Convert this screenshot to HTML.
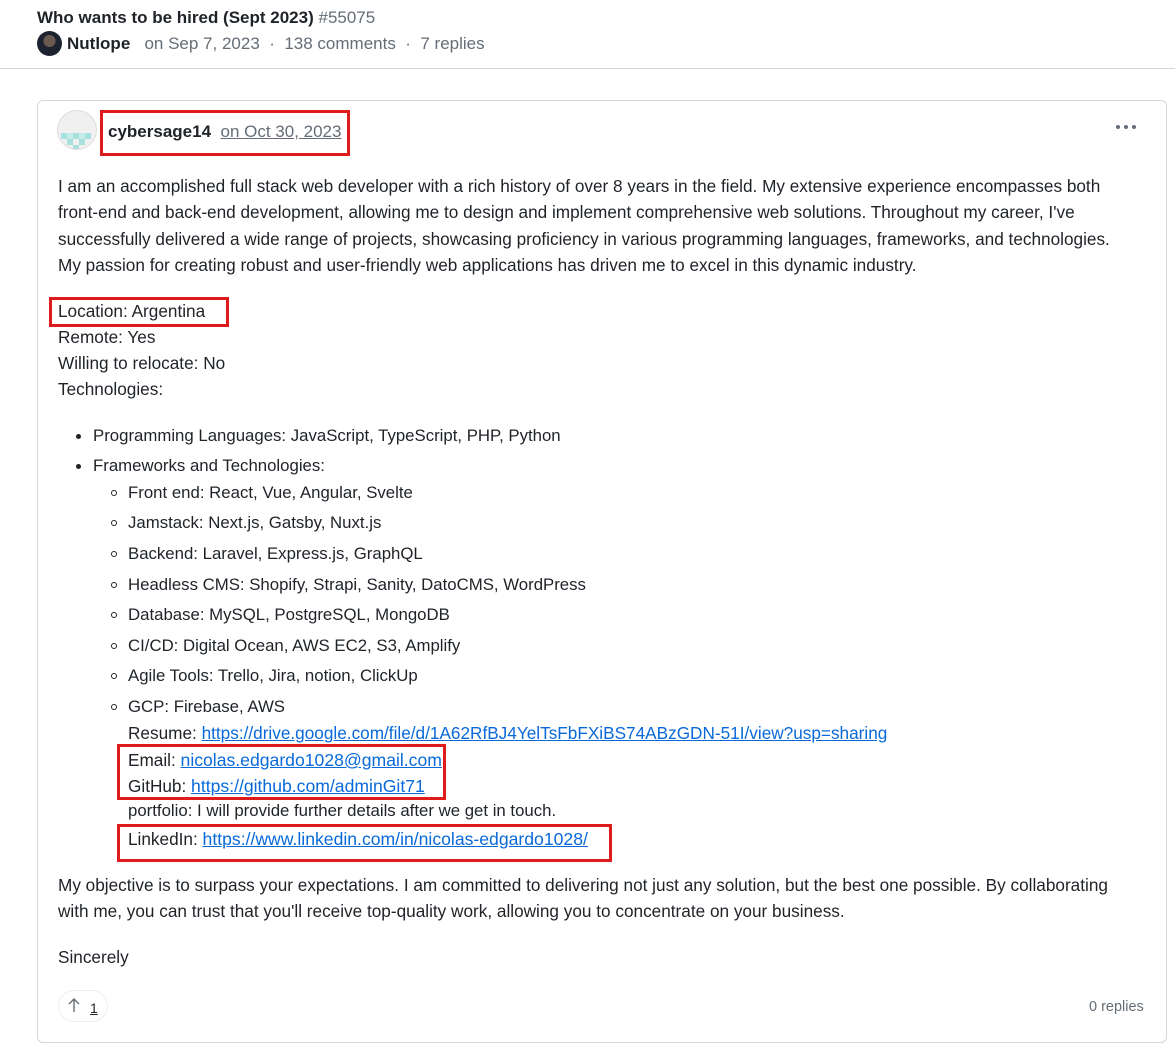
<!DOCTYPE html>
<html><head><meta charset="utf-8"><style>
*{margin:0;padding:0;box-sizing:border-box}
body{width:1175px;height:1051px;background:#fff;font-family:"Liberation Sans",sans-serif;color:#1f2328;position:relative;overflow:hidden}
.l{position:absolute;white-space:nowrap;font-size:17.2px;line-height:20px}
.s{font-size:16.8px}
a{color:#0969da;text-decoration:underline;font-size:17.6px}
.red{position:absolute;border:3.5px solid #e01b1b}
.dot{position:absolute;width:5px;height:5px;border-radius:50%;background:#1f2328}
.circ{position:absolute;width:6px;height:6px;border-radius:50%;border:1px solid #1f2328}
</style></head><body>
<div class="l" style="left:37px;top:8px;font-size:17px;font-weight:bold">Who wants to be hired (Sept 2023) <span style="font-weight:normal;color:#656d76">#55075</span></div>
<div style="position:absolute;left:37px;top:31px;width:25px;height:25px;border-radius:50%;background:radial-gradient(circle at 50% 40%,#6b5a50 0 30%,#1c2230 32%)"></div>
<div class="l" style="left:67px;top:34px;font-size:17px;color:#656d76"><b style="color:#1f2328">Nutlope</b> &nbsp;&nbsp;on Sep 7, 2023 &nbsp;·&nbsp; 138 comments &nbsp;·&nbsp; 7 replies</div>
<div style="position:absolute;left:0;top:68px;width:1175px;height:1px;background:#d0d7de"></div>
<div style="position:absolute;left:37px;top:100px;width:1130px;height:943px;border:1px solid #d0d7de;border-radius:6px"></div>
<div style="position:absolute;left:57px;top:110px;width:40px;height:40px;border-radius:50%;background:#f0f0f0;border:1px solid #ddd;overflow:hidden">
<div style="position:absolute;left:3px;top:22px;width:6px;height:6px;background:#a8e0dc"></div>
<div style="position:absolute;left:9px;top:28px;width:6px;height:6px;background:#a8e0dc"></div>
<div style="position:absolute;left:15px;top:22px;width:6px;height:6px;background:#a8e0dc"></div>
<div style="position:absolute;left:15px;top:34px;width:6px;height:6px;background:#a8e0dc"></div>
<div style="position:absolute;left:21px;top:28px;width:6px;height:6px;background:#a8e0dc"></div>
<div style="position:absolute;left:27px;top:22px;width:6px;height:6px;background:#a8e0dc"></div>
<div style="position:absolute;left:9px;top:22px;width:6px;height:6px;background:#c4ecea"></div>
<div style="position:absolute;left:21px;top:22px;width:6px;height:6px;background:#c4ecea"></div>
</div>
<div class="l" style="left:108px;top:122px;font-size:17px"><b>cybersage14</b> &nbsp;<span style="color:#656d76;text-decoration:underline">on Oct 30, 2023</span></div>
<div class="red" style="left:100px;top:110px;width:250px;height:46px"></div>
<div style="position:absolute;left:1116px;top:125px;font-size:0">
<span style="display:inline-block;width:4px;height:4px;border-radius:50%;background:#656d76;margin-right:4px"></span><span style="display:inline-block;width:4px;height:4px;border-radius:50%;background:#656d76;margin-right:4px"></span><span style="display:inline-block;width:4px;height:4px;border-radius:50%;background:#656d76"></span></div>

<div class="l" style="left:58px;top:176px">I am an accomplished full stack web developer with a rich history of over 8 years in the field. My extensive experience encompasses both</div>
<div class="l" style="left:58px;top:202px">front-end and back-end development, allowing me to design and implement comprehensive web solutions. Throughout my career, I've</div>
<div class="l" style="left:58px;top:229px">successfully delivered a wide range of projects, showcasing proficiency in various programming languages, frameworks, and technologies.</div>
<div class="l" style="left:58px;top:255px">My passion for creating robust and user-friendly web applications has driven me to excel in this dynamic industry.</div>

<div class="l" style="left:58px;top:301px">Location: Argentina</div>
<div class="red" style="left:49px;top:297px;width:180px;height:30px"></div>
<div class="l" style="left:58px;top:327px">Remote: Yes</div>
<div class="l" style="left:58px;top:353px">Willing to relocate: No</div>
<div class="l" style="left:58px;top:379px">Technologies:</div>

<div class="dot" style="left:76px;top:434px"></div>
<div class="l s" style="left:93px;top:426px">Programming Languages: JavaScript, TypeScript, PHP, Python</div>
<div class="dot" style="left:76px;top:464px"></div>
<div class="l s" style="left:93px;top:456px">Frameworks and Technologies:</div>

<div class="circ" style="left:111px;top:490px"></div><div class="l s" style="left:128px;top:483px">Front end: React, Vue, Angular, Svelte</div>
<div class="circ" style="left:111px;top:520px"></div><div class="l s" style="left:128px;top:513px">Jamstack: Next.js, Gatsby, Nuxt.js</div>
<div class="circ" style="left:111px;top:551px"></div><div class="l s" style="left:128px;top:544px">Backend: Laravel, Express.js, GraphQL</div>
<div class="circ" style="left:111px;top:582px"></div><div class="l s" style="left:128px;top:575px">Headless CMS: Shopify, Strapi, Sanity, DatoCMS, WordPress</div>
<div class="circ" style="left:111px;top:612px"></div><div class="l s" style="left:128px;top:605px">Database: MySQL, PostgreSQL, MongoDB</div>
<div class="circ" style="left:111px;top:643px"></div><div class="l s" style="left:128px;top:636px">CI/CD: Digital Ocean, AWS EC2, S3, Amplify</div>
<div class="circ" style="left:111px;top:673px"></div><div class="l s" style="left:128px;top:666px">Agile Tools: Trello, Jira, notion, ClickUp</div>
<div class="circ" style="left:111px;top:704px"></div><div class="l s" style="left:128px;top:697px">GCP: Firebase, AWS</div>
<div class="l" style="left:128px;top:723px">Resume: <a style="font-size:17.2px">https://drive.google.com/file/d/1A62RfBJ4YelTsFbFXiBS74ABzGDN-51I/view?usp=sharing</a></div>
<div class="l" style="left:128px;top:750px">Email: <a>nicolas.edgardo1028@gmail.com</a></div>
<div class="l" style="left:128px;top:776px">GitHub: <a>https://github.com/adminGit71</a></div>
<div class="red" style="left:117px;top:744px;width:329px;height:56px"></div>
<div class="l s" style="left:128px;top:801px">portfolio: I will provide further details after we get in touch.</div>
<div class="l" style="left:128px;top:829px">LinkedIn: <a>https://www.linkedin.com/in/nicolas-edgardo1028/</a></div>
<div class="red" style="left:117px;top:824px;width:495px;height:38px"></div>

<div class="l" style="left:58px;top:875px">My objective is to surpass your expectations. I am committed to delivering not just any solution, but the best one possible. By collaborating</div>
<div class="l" style="left:58px;top:901px">with me, you can trust that you'll receive top-quality work, allowing you to concentrate on your business.</div>
<div class="l" style="left:58px;top:947px">Sincerely</div>

<div style="position:absolute;left:58px;top:990px;width:50px;height:32px;border:1px solid #eaeef2;border-radius:16px"></div>
<svg style="position:absolute;left:67px;top:997px" width="14" height="16" viewBox="0 0 14 16"><path d="M7 15V2M2 7l5-5 5 5" fill="none" stroke="#656d76" stroke-width="1.4"/></svg>
<div class="l" style="left:90px;top:998px;font-size:14px;text-decoration:underline">1</div>
<div class="l" style="left:1089px;top:997px;font-size:14.5px;color:#656d76">0 replies</div>
</body></html>
